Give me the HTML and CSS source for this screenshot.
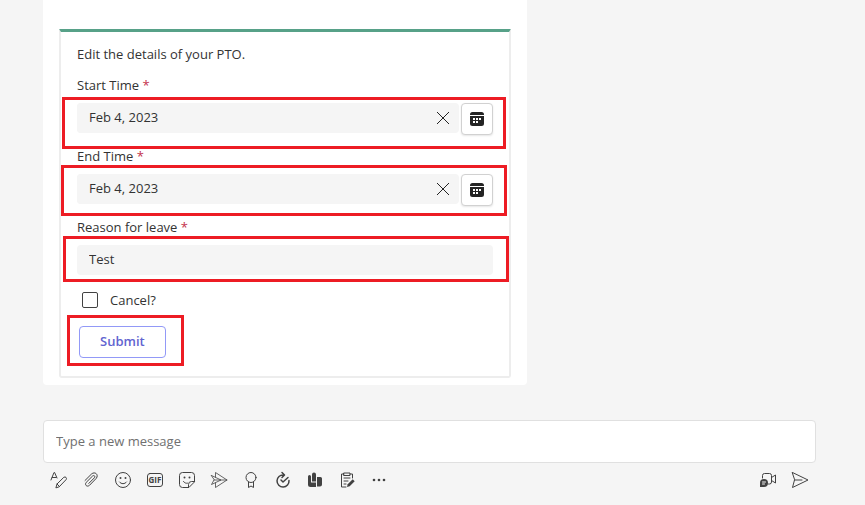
FILE: index.html
```html
<!DOCTYPE html>
<html lang="en">
<head>
    <meta charset="UTF-8">
    <meta name="viewport" content="width=device-width, initial-scale=1.0">
    <title>Edit PTO</title>
    <link rel="stylesheet" href="styles.css">
</head>
<body>
    <main class="chat">
        <div class="message">
            <form class="card" onsubmit="return false">
                <p class="card-title">Edit the details of your PTO.</p>

                <div class="field">
                    <label for="startTime">Start Time <span class="required">*</span></label>
                    <div class="date-row highlight highlight-start">
                        <div class="date-box">
                            <input type="text" id="startTime" value="Feb 4, 2023" required>
                            <button type="button" class="clear-btn" aria-label="Clear start time">
                                <svg width="14" height="14" viewBox="0 0 14 14"><path d="M1 1l12 12M13 1L1 13"/></svg>
                            </button>
                        </div>
                        <button type="button" class="calendar-btn" aria-label="Pick start time">
                            <svg width="16" height="16" viewBox="0 0 16 16">
                                <path d="M1 4V3.500A2.500 2.500 0 0 1 3.500 1h9A2.500 2.500 0 0 1 15 3.500V4z"/>
                                <path d="M1 5h14v7.500a2.500 2.500 0 0 1-2.500 2.500h-9A2.500 2.500 0 0 1 1 12.500z"/>
                                <path class="dots" d="M7 7h2v2H7zM10 7h2v2h-2zM4 7h2v2H4zM4 10h2v2H4zM7 10h2v2H7z"/>
                            </svg>
                        </button>
                    </div>
                </div>

                <div class="field">
                    <label for="endTime">End Time <span class="required">*</span></label>
                    <div class="date-row highlight highlight-end">
                        <div class="date-box">
                            <input type="text" id="endTime" value="Feb 4, 2023" required>
                            <button type="button" class="clear-btn" aria-label="Clear end time">
                                <svg width="14" height="14" viewBox="0 0 14 14"><path d="M1 1l12 12M13 1L1 13"/></svg>
                            </button>
                        </div>
                        <button type="button" class="calendar-btn" aria-label="Pick end time">
                            <svg width="16" height="16" viewBox="0 0 16 16">
                                <path d="M1 4V3.500A2.500 2.500 0 0 1 3.500 1h9A2.500 2.500 0 0 1 15 3.500V4z"/>
                                <path d="M1 5h14v7.500a2.500 2.500 0 0 1-2.500 2.500h-9A2.500 2.500 0 0 1 1 12.500z"/>
                                <path class="dots" d="M7 7h2v2H7zM10 7h2v2h-2zM4 7h2v2H4zM4 10h2v2H4zM7 10h2v2H7z"/>
                            </svg>
                        </button>
                    </div>
                </div>

                <div class="field">
                    <label for="reason">Reason for leave <span class="required">*</span></label>
                    <div class="highlight highlight-reason">
                        <input type="text" id="reason" class="text-box" value="Test" required>
                    </div>
                </div>

                <div class="check-row">
                    <input type="checkbox" id="cancel">
                    <label for="cancel">Cancel?</label>
                </div>

                <div class="submit-wrap highlight highlight-submit">
                    <button type="submit" class="submit-btn">Submit</button>
                </div>
            </form>
        </div>

        <div class="composer">
            <input type="text" class="composer-input" placeholder="Type a new message" aria-label="Type a new message">
            <div class="toolbar">
                <button type="button" aria-label="Format">
                    <svg viewBox="0 0 20 20"><path d="M2 10L5 2.500h.6L8 8M3.200 7.500h4M7 17.500l1-3.500 6.800-6.700c1.700-1.200 3.500.8 2.300 2.300L10.500 16.500zM8 14l2.500 2.500"/></svg>
                </button>
                <button type="button" aria-label="Attach">
                    <svg viewBox="0 0 20 20"><path d="M4 10.500l6.500-6.500c3.500-3 7.500.8 4.800 4.300L8.500 15.300c-2.600 2.200-5.200-.6-3.300-2.900l6.400-6.400c1.500-1.200 2.900.3 1.900 1.700l-5.700 5.700"/></svg>
                </button>
                <button type="button" aria-label="Emoji">
                    <svg viewBox="0 0 20 20"><circle cx="10" cy="10" r="7.500"/><path d="M6.500 12c1.700 2.300 5.300 2.300 7 0"/><circle class="solid" cx="7.500" cy="8" r="1"/><circle class="solid" cx="12.500" cy="8" r="1"/></svg>
                </button>
                <button type="button" aria-label="GIF">
                    <svg viewBox="0 0 20 20"><rect x="2.500" y="3.500" width="15" height="13" rx="2.500"/><text x="10" y="13" text-anchor="middle">GIF</text></svg>
                </button>
                <button type="button" aria-label="Sticker">
                    <svg viewBox="0 0 20 20"><path d="M11.500 17.500h-6a3 3 0 0 1-3-3v-9a3 3 0 0 1 3-3h9a3 3 0 0 1 3 3v6zM11.500 17.500v-3a3 3 0 0 1 3-3h3M6.500 11.500c1 1.500 2.500 2 4 1.700"/><circle class="solid" cx="7.500" cy="7.500" r="1"/><circle class="solid" cx="12.500" cy="7.500" r="1"/></svg>
                </button>
                <button type="button" aria-label="Actions">
                    <svg class="thin" viewBox="0 0 20 20"><path d="M6.500 7V2.500L18 10 6.500 17.500V13M2.500 5.500L12 10l-9.500 4.500L5 10zM5 10h13"/></svg>
                </button>
                <button type="button" aria-label="Praise">
                    <svg viewBox="0 0 20 20"><circle cx="10" cy="7.500" r="5"/><path d="M7.500 12v5.500L10 16l2.500 1.500V12"/></svg>
                </button>
                <button type="button" aria-label="Updates">
                    <svg class="bold" viewBox="0 0 20 20"><path d="M10.500 5A6 6 0 1 0 16 10.500M9 2.500L11.500 5 9 7.500M8 10l2 2 5-4.500"/></svg>
                </button>
                <button type="button" aria-label="Viva">
                    <svg viewBox="0 0 20 20"><path class="solid" d="M7 4.500a2 2 0 0 1 4 0V11.500H7zM12 7h3.500A1.500 1.500 0 0 1 17 8.500v6a2 2 0 0 1-2 2h-3zM3 6.500A1.500 1.500 0 0 1 6 6.500v6h5v4.500H5.500A2.500 2.500 0 0 1 3 14.500z"/></svg>
                </button>
                <button type="button" aria-label="Approvals">
                    <svg viewBox="0 0 20 20"><path d="M7 4H4.500v13H9M13 4h2.500v4M7 3h6v2.500H7zM7 8h6M7 11h4M7 14h2"/><path class="solid" d="M10 17l.7-2.700 5-5 2 2-5 5z"/></svg>
                </button>
                <button type="button" aria-label="More">
                    <svg viewBox="0 0 20 20"><circle class="solid" cx="5" cy="10" r="1.300"/><circle class="solid" cx="10" cy="10" r="1.300"/><circle class="solid" cx="15" cy="10" r="1.300"/></svg>
                </button>
                <span class="spacer"></span>
                <button type="button" aria-label="Record video clip">
                    <svg viewBox="0 0 20 20"><path d="M4.500 8V5.500a2 2 0 0 1 2-2h5a2 2 0 0 1 2 2v6.500a2 2 0 0 1-2 2H10.500M13.500 7.500l4-2.500v8l-4-2.500"/><circle class="solid" cx="6" cy="13" r="4"/><path class="solid" d="M2 13v4h4z"/><path class="cut" d="M4.500 12h3M4.500 14h2"/></svg>
                </button>
                <button type="button" aria-label="Send">
                    <svg viewBox="0 0 20 20"><path d="M2.500 2.500L18 10 2.500 17.500 4.500 10zM4.500 10h7.500"/></svg>
                </button>
            </div>
        </div>
    </main>
</body>
</html>
```
FILE: styles.css
```css
* {
    box-sizing: border-box;
}
body {
    font-family: "Open Sans", "Noto Sans", sans-serif;
    font-size: 13px;
    line-height: 20px;
    margin: 0;
    background-color: #f5f5f5;
    color: #333;
}
button, input {
    font: inherit;
    color: inherit;
}
button {
    display: flex;
    align-items: center;
    justify-content: center;
    padding: 0;
    border: none;
    background: none;
    cursor: pointer;
}
.chat {
    padding: 0 49px 8px 43px;
}
.message {
    max-width: 484px;
    padding: 29px 16px 7px;
    background-color: white;
    border-radius: 0 0 4px 4px;
}
.card {
    padding: 12px 16px 18px;
    border: 2px solid #ededed;
    border-top: 3px solid #57a188;
    border-radius: 1px 1px 3px 3px;
}
.card-title {
    margin: 0;
}
.field {
    display: flex;
    flex-direction: column;
    gap: 8px;
    margin-top: 11px;
}
.required {
    color: #c4314b;
}
.date-row {
    display: flex;
    align-items: flex-start;
    gap: 2px;
}
.date-box {
    display: flex;
    flex: 1;
    align-items: center;
    background-color: #f5f5f5;
    border-radius: 4px;
}
.date-box input, .text-box {
    flex: 1;
    width: 100%;
    min-width: 0;
    height: 30px;
    padding: 0 12px 2px;
    border: none;
    border-radius: 4px;
    background-color: #f5f5f5;
}
.text-box {
    display: block;
}
.clear-btn {
    width: 32px;
    height: 30px;
}
.clear-btn svg {
    fill: none;
    stroke: #242424;
}
.calendar-btn {
    width: 32px;
    height: 32px;
    background-color: white;
    border: 1px solid #d1d1d1;
    border-radius: 4px;
    box-shadow: 0 1px 2px rgba(0,0,0,0.1);
}
.calendar-btn svg {
    fill: #242424;
}
.calendar-btn .dots {
    fill: white;
}
.check-row {
    display: flex;
    align-items: center;
    gap: 12px;
    margin-top: 15px;
    padding-left: 5px;
}
.check-row input {
    appearance: none;
    width: 16px;
    height: 16px;
    margin: 0;
    border: 1px solid #424242;
    border-radius: 2px;
}
.submit-wrap {
    width: fit-content;
    margin: 16px 0 0 2px;
}
.submit-btn {
    height: 32px;
    padding: 0 20px 2px;
    border: 1px solid #9299f7;
    border-radius: 4px;
    color: #6264d0;
    font-weight: 600;
}

/* red frames around the parts the user fills in */
.highlight {
    position: relative;
}
.highlight::after {
    content: "";
    position: absolute;
    border: 3px solid #ed1c24;
    pointer-events: none;
}
.highlight-start::after {
    inset: -6px -13px -14px -15px;
}
.highlight-end::after {
    inset: -9px -14px -10px -16px;
}
.highlight-reason::after {
    inset: -9px -16px -7px -14px;
}
.highlight-submit::after {
    inset: -11px -18px -8px -12px;
}

.composer {
    margin-top: 35px;
}
.composer-input {
    display: block;
    width: 100%;
    height: 43px;
    padding: 0 12px 2px;
    border: 1px solid #e0e0e0;
    border-radius: 4px;
    background-color: white;
}
.composer-input::placeholder {
    color: #707070;
    opacity: 1;
}
.toolbar {
    display: flex;
    margin-top: 1px;
}
.toolbar button {
    width: 32px;
    height: 32px;
}
.toolbar svg {
    width: 20px;
    height: 20px;
    fill: none;
    stroke: #424242;
    stroke-linejoin: round;
    stroke-linecap: round;
}
.toolbar .solid {
    fill: #424242;
    stroke: none;
}
.toolbar .thin {
    stroke-width: 0.8;
}
.toolbar .bold {
    stroke-width: 1.5;
}
.toolbar .cut {
    stroke: #f5f5f5;
}
.toolbar text {
    fill: #424242;
    stroke: none;
    font-size: 8px;
    font-weight: 700;
}
.spacer {
    flex: 1;
}
```
